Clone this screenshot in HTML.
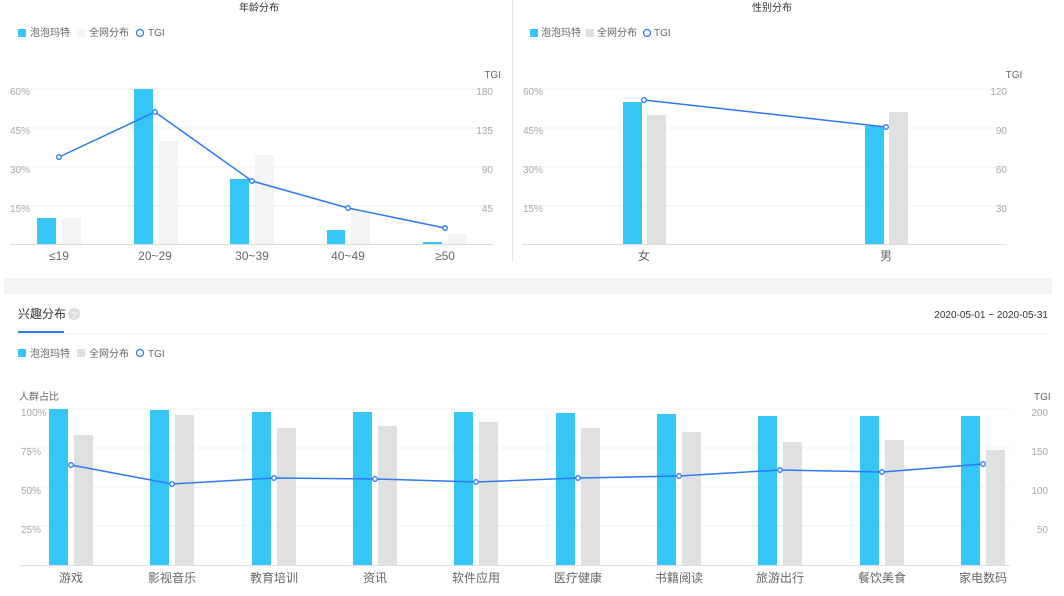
<!DOCTYPE html>
<html><head><meta charset="utf-8"><style>
html,body{margin:0;padding:0;background:#fff;width:1064px;height:596px;overflow:hidden}
svg text{font-family:"Liberation Sans","Noto Sans CJK SC",sans-serif}
</style></head><body>
<svg width="1064" height="596" xmlns="http://www.w3.org/2000/svg">
<!-- divider -->
<line x1="512.5" y1="0" x2="512.5" y2="262" stroke="#e6e6e6"/>
<rect x="4" y="278" width="1048" height="16" fill="#f3f3f3"/>

<!-- AGE -->
<text x="259" y="11" font-size="10" fill="#333" text-anchor="middle">年龄分布</text>
<g font-size="10" fill="#666">
<rect x="18" y="29" width="8" height="8" rx="1" fill="#36c6f6"/><text x="30" y="36">泡泡玛特</text>
<rect x="77" y="29" width="8" height="8" fill="#f4f4f4"/><text x="89" y="36">全网分布</text>
<circle cx="140" cy="33" r="3.5" fill="none" stroke="#2d79f2" stroke-width="1.3"/><text x="148" y="36">TGI</text>
</g>
<g stroke="#f0f0f0"><line x1="10" y1="89" x2="493" y2="89"/><line x1="10" y1="128" x2="493" y2="128"/><line x1="10" y1="167" x2="493" y2="167"/><line x1="10" y1="206" x2="493" y2="206"/></g>
<g font-size="10" fill="#aaa"><text x="10" y="95">60%</text><text x="10" y="134">45%</text><text x="10" y="173">30%</text><text x="10" y="212">15%</text>
<text x="501" y="78" text-anchor="end" fill="#666">TGI</text>
<text x="493" y="95" text-anchor="end">180</text><text x="493" y="134" text-anchor="end">135</text><text x="493" y="173" text-anchor="end">90</text><text x="493" y="212" text-anchor="end">45</text></g>
<g fill="#36c6f6"><rect x="37" y="218" width="19" height="26"/><rect x="134" y="89" width="19" height="155"/><rect x="230" y="179" width="19" height="65"/><rect x="327" y="230" width="18" height="14"/><rect x="423" y="242" width="19" height="2"/></g>
<g fill="#f4f4f4"><rect x="62" y="218" width="19" height="26"/><rect x="159" y="141" width="19" height="103"/><rect x="255" y="155" width="19" height="89"/><rect x="351" y="212" width="19" height="32"/><rect x="448" y="234" width="19" height="10"/></g>
<line x1="10" y1="244.5" x2="493" y2="244.5" stroke="#ddd"/>
<polyline points="59,157 155,112 252,181 348,208 445,228" fill="none" stroke="#2d79f2" stroke-width="1.5"/>
<g fill="#fff" stroke="#2d79f2" stroke-width="1.3"><circle cx="59" cy="157" r="2.3"/><circle cx="155" cy="112" r="2.3"/><circle cx="252" cy="181" r="2.3"/><circle cx="348" cy="208" r="2.3"/><circle cx="445" cy="228" r="2.3"/></g>
<g font-size="12" fill="#666" text-anchor="middle"><text x="59" y="260">≤19</text><text x="155" y="260">20~29</text><text x="252" y="260">30~39</text><text x="348" y="260">40~49</text><text x="445" y="260">≥50</text></g>

<!-- GENDER -->
<text x="772" y="11" font-size="10" fill="#333" text-anchor="middle">性别分布</text>
<g font-size="10" fill="#666">
<rect x="530" y="29" width="8" height="8" rx="1" fill="#36c6f6"/><text x="541" y="36">泡泡玛特</text>
<rect x="586" y="29" width="8" height="8" fill="#e0e0e0"/><text x="597" y="36">全网分布</text>
<circle cx="647" cy="33" r="3.5" fill="none" stroke="#2d79f2" stroke-width="1.3"/><text x="654" y="36">TGI</text>
</g>
<g stroke="#f0f0f0"><line x1="522" y1="89" x2="1007" y2="89"/><line x1="522" y1="128" x2="1007" y2="128"/><line x1="522" y1="167" x2="1007" y2="167"/><line x1="522" y1="206" x2="1007" y2="206"/></g>
<g font-size="10" fill="#aaa"><text x="523" y="95">60%</text><text x="523" y="134">45%</text><text x="523" y="173">30%</text><text x="523" y="212">15%</text>
<text x="1014" y="78" text-anchor="middle" fill="#666">TGI</text>
<text x="1007" y="95" text-anchor="end">120</text><text x="1007" y="134" text-anchor="end">90</text><text x="1007" y="173" text-anchor="end">60</text><text x="1007" y="212" text-anchor="end">30</text></g>
<rect x="623" y="102" width="19" height="142" fill="#36c6f6"/><rect x="647" y="115" width="19" height="129" fill="#e0e0e0"/>
<rect x="865" y="126" width="19" height="118" fill="#36c6f6"/><rect x="889" y="112" width="19" height="132" fill="#e0e0e0"/>
<line x1="522" y1="244.5" x2="1007" y2="244.5" stroke="#ddd"/>
<polyline points="644,100 886,127" fill="none" stroke="#2d79f2" stroke-width="1.5"/>
<g fill="#fff" stroke="#2d79f2" stroke-width="1.3"><circle cx="644" cy="100" r="2.3"/><circle cx="886" cy="127" r="2.3"/></g>
<g font-size="12" fill="#666" text-anchor="middle"><text x="644" y="260">女</text><text x="886" y="260">男</text></g>

<!-- INTEREST -->
<text x="18" y="318" font-size="12" fill="#333">兴趣分布</text>
<circle cx="74" cy="314" r="6" fill="#ddd"/><text x="74" y="318" font-size="9" fill="#fff" text-anchor="middle">?</text>
<line x1="18" y1="333.5" x2="1048" y2="333.5" stroke="#eee"/>
<rect x="18" y="331" width="46" height="2" fill="#2d79f2"/>
<text x="1048" y="318" font-size="10" fill="#333" text-anchor="end">2020-05-01 ~ 2020-05-31</text>
<g font-size="10" fill="#666">
<rect x="18" y="349" width="8" height="8" rx="1" fill="#36c6f6"/><text x="30" y="357">泡泡玛特</text>
<rect x="77" y="349" width="8" height="8" fill="#e0e0e0"/><text x="89" y="357">全网分布</text>
<circle cx="140" cy="353" r="3.5" fill="none" stroke="#2d79f2" stroke-width="1.3"/><text x="148" y="357">TGI</text>
<text x="19" y="400" fill="#666">人群占比</text>
<text x="1034" y="400" fill="#666">TGI</text>
</g>
<g stroke="#f0f0f0"><line x1="20" y1="409" x2="1010" y2="409"/><line x1="20" y1="448" x2="1010" y2="448"/><line x1="20" y1="487" x2="1010" y2="487"/><line x1="20" y1="526" x2="1010" y2="526"/></g>
<g font-size="10" fill="#aaa"><text x="21" y="416">100%</text><text x="21" y="455">75%</text><text x="21" y="494">50%</text><text x="21" y="533">25%</text>
<text x="1048" y="416" text-anchor="end">200</text><text x="1048" y="455" text-anchor="end">150</text><text x="1048" y="494" text-anchor="end">100</text><text x="1048" y="533" text-anchor="end">50</text></g>
<g fill="#36c6f6">
<rect x="49" y="409" width="19" height="156"/><rect x="150" y="410" width="19" height="155"/><rect x="252" y="412" width="19" height="153"/><rect x="353" y="412" width="19" height="153"/><rect x="454" y="412" width="19" height="153"/><rect x="556" y="413" width="19" height="152"/><rect x="657" y="414" width="19" height="151"/><rect x="758" y="416" width="19" height="149"/><rect x="860" y="416" width="19" height="149"/><rect x="961" y="416" width="19" height="149"/></g>
<g fill="#e0e0e0">
<rect x="74" y="435" width="19" height="130"/><rect x="175" y="415" width="19" height="150"/><rect x="277" y="428" width="19" height="137"/><rect x="378" y="426" width="19" height="139"/><rect x="479" y="422" width="19" height="143"/><rect x="581" y="428" width="19" height="137"/><rect x="682" y="432" width="19" height="133"/><rect x="783" y="442" width="19" height="123"/><rect x="885" y="440" width="19" height="125"/><rect x="986" y="450" width="19" height="115"/></g>
<line x1="20" y1="565.5" x2="1010" y2="565.5" stroke="#ddd"/>
<polyline points="71,465 172,484 274,478 375,479 476,482 578,478 679,476 780,470 882,472 983,464" fill="none" stroke="#2d79f2" stroke-width="1.5"/>
<g fill="#fff" stroke="#2d79f2" stroke-width="1.3"><circle cx="71" cy="465" r="2.3"/><circle cx="172" cy="484" r="2.3"/><circle cx="274" cy="478" r="2.3"/><circle cx="375" cy="479" r="2.3"/><circle cx="476" cy="482" r="2.3"/><circle cx="578" cy="478" r="2.3"/><circle cx="679" cy="476" r="2.3"/><circle cx="780" cy="470" r="2.3"/><circle cx="882" cy="472" r="2.3"/><circle cx="983" cy="464" r="2.3"/></g>
<g font-size="12" fill="#666" text-anchor="middle"><text x="71" y="582">游戏</text><text x="172" y="582">影视音乐</text><text x="274" y="582">教育培训</text><text x="375" y="582">资讯</text><text x="476" y="582">软件应用</text><text x="578" y="582">医疗健康</text><text x="679" y="582">书籍阅读</text><text x="780" y="582">旅游出行</text><text x="882" y="582">餐饮美食</text><text x="983" y="582">家电数码</text></g>
</svg>
</body></html>
